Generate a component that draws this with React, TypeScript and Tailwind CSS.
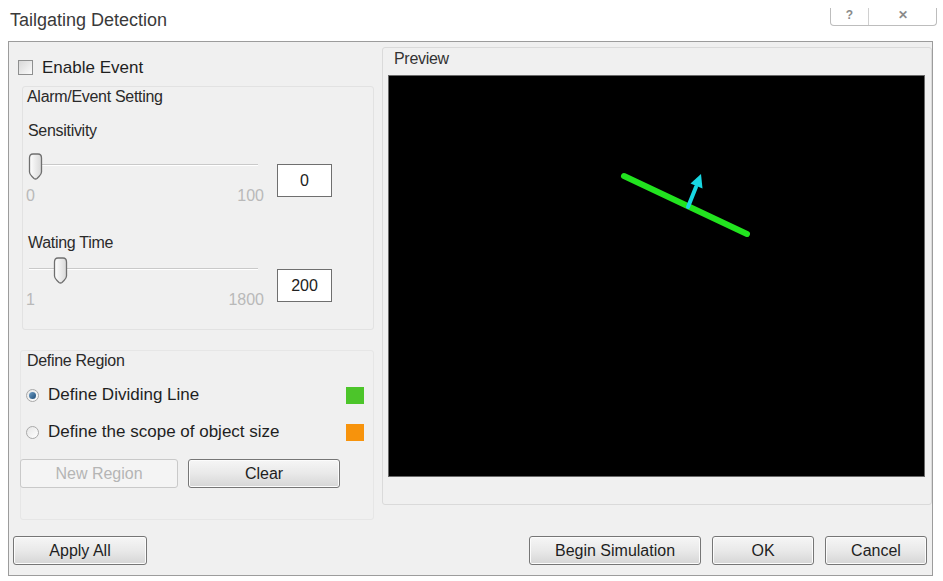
import React from "react";

const font = { fontFamily: '"Liberation Sans", Arial, sans-serif' };

function Thumb() {
  return (
    <svg width="15" height="27" viewBox="0 0 15 27">
      <defs>
        <linearGradient id="tg" x1="0" y1="0" x2="1" y2="0">
          <stop offset="0" stopColor="#ffffff" />
          <stop offset="1" stopColor="#d8d8d8" />
        </linearGradient>
      </defs>
      <path d="M1.5 5 Q1.5 1 5 1 L10 1 Q13.5 1 13.5 5 L13.5 19 Q13.5 21 11 23.5 L9 25.5 Q7.5 26.5 6 25.5 L4 23.5 Q1.5 21 1.5 19 Z" fill="url(#tg)" stroke="#6f6f6f" strokeWidth="1.3" />
    </svg>
  );
}

function Slider({ pos, min, max, value, boxTop }: { pos: number; min: string; max: string; value: string; boxTop: string }) {
  return (
    <div className="flex">
      <div className="relative w-[243px] h-[56px] ml-[3px]">
        <div className="absolute left-[3px] top-[11px] w-[229px] h-[2px] bg-[#c9c9c9] border-b border-white" />
        <div className="absolute top-0" style={{ left: pos }}>
          <Thumb />
        </div>
        <div className="absolute left-0 top-[34px] text-[16px] leading-[18px] text-[#b9b9b9]">{min}</div>
        <div className="absolute right-[5px] top-[34px] text-[16px] leading-[18px] text-[#b9b9b9]">{max}</div>
      </div>
      <div className={"ml-[8px] w-[55px] h-[33px] border border-[#6f6f6f] bg-white flex items-center justify-center text-[16px] text-[#222] " + boxTop}>
        {value}
      </div>
    </div>
  );
}

function Btn({ w, children, disabled }: { w: string; children: React.ReactNode; disabled?: boolean }) {
  return (
    <div
      className={
        "h-[29px] rounded-[3px] border flex items-center justify-center text-[16px] " +
        w +
        (disabled
          ? " border-[#c9c9c9] bg-[#f4f4f4] text-[#b5b5b5]"
          : " border-[#767676] bg-gradient-to-b from-[#f6f6f6] via-[#e9e9e9] to-[#d6d6d6] text-[#1e1e1e] shadow-[inset_0_0_0_1px_#fcfcfc]")
      }
    >
      {children}
    </div>
  );
}

function Radio({ checked }: { checked?: boolean }) {
  return (
    <div className="w-[13px] h-[13px] rounded-full border border-[#a9a9a9] bg-gradient-to-br from-[#e6e6e6] to-[#ffffff] flex items-center justify-center">
      {checked && <div className="w-[7px] h-[7px] rounded-full bg-gradient-to-br from-[#6fa0c8] to-[#1f4d78]" />}
    </div>
  );
}

export default function App() {
  return (
    <div className="w-[943px] h-[581px] bg-white flex flex-col overflow-hidden" style={font}>
      {/* title bar */}
      <div className="h-[41px] flex items-start justify-between">
        <div className="ml-[10px] mt-[9px] text-[18px] leading-[22px] text-[#3a3a3a]">Tailgating Detection</div>
        <div className="mr-[6px] mt-[8px] w-[107px] h-[18px] border border-t-0 border-[#bdbdbd] rounded-b-[4px] flex text-[#8a8a8a] text-[12px] font-bold">
          <div className="w-[38px] border-r border-[#d0d0d0] flex items-start justify-center pt-[0px] leading-[14px]">?</div>
          <div className="flex-1 flex items-start justify-center leading-[14px]">✕</div>
        </div>
      </div>

      {/* body */}
      <div className="ml-[8px] mr-[10px] h-[535px] border border-[#9c9c9c] bg-[#f0f0f0] flex flex-col">
        <div className="h-[478px] flex">
          {/* left column */}
          <div className="w-[372px] flex flex-col">
            <div className="mt-[17px] ml-[9px] flex items-center h-[17px]">
              <div className="w-[15px] h-[15px] border border-[#8e8f8f] bg-gradient-to-br from-[#d8d8d8] to-[#fbfbfb]" />
              <div className="ml-[9px] text-[17px] leading-[20px] text-[#1f1f1f]">Enable Event</div>
            </div>

            <div className="mt-[10px] ml-[13px] w-[352px] h-[244px] border border-[#e2e2e2] rounded-[3px] flex flex-col text-[#2a2a2a]">
              <div className="ml-[4px] text-[16px] leading-[20px] tracking-[-0.3px]">Alarm/Event Setting</div>
              <div className="mt-[14px] ml-[5px] text-[16px] leading-[20px] tracking-[-0.3px]">Sensitivity</div>
              <div className="mt-[12px]">
                <Slider pos={2} min="0" max="100" value="0" boxTop="mt-[11px]" />
              </div>
              <div className="mt-[24px] ml-[5px] text-[16px] leading-[20px] tracking-[-0.3px]">Wating Time</div>
              <div className="mt-[4px]">
                <Slider pos={27} min="1" max="1800" value="200" boxTop="mt-[12px]" />
              </div>
            </div>

            <div className="mt-[20px] ml-[11px] w-[354px] h-[170px] border border-[#e6e6e6] rounded-[3px] flex flex-col text-[#2a2a2a]">
              <div className="ml-[6px] text-[16px] leading-[20px] tracking-[-0.3px]">Define Region</div>
              <div className="mt-[14px] flex items-center h-[20px]">
                <div className="ml-[5px]"><Radio checked /></div>
                <div className="ml-[9px] text-[17px] leading-[20px] text-[#1f1f1f]">Define Dividing Line</div>
                <div className="ml-auto mr-[9px] w-[18px] h-[17px] bg-[#4cc52a]" />
              </div>
              <div className="mt-[17px] flex items-center h-[20px]">
                <div className="ml-[5px]"><Radio /></div>
                <div className="ml-[9px] text-[17px] leading-[20px] text-[#1f1f1f]">Define the scope of object size</div>
                <div className="ml-auto mr-[9px] w-[18px] h-[17px] bg-[#f7930c]" />
              </div>
              <div className="mt-[17px] flex gap-[10px] -ml-[1px]">
                <Btn w="w-[158px]" disabled>New Region</Btn>
                <Btn w="w-[152px]">Clear</Btn>
              </div>
            </div>
          </div>

          {/* right column */}
          <div className="ml-[1px] mt-[5px] w-[550px] h-[458px] border border-[#dadada] rounded-[3px] flex flex-col">
            <div className="ml-[11px] mt-[1px] text-[16px] leading-[20px] text-[#333] tracking-[-0.3px]">Preview</div>
            <div className="ml-[5px] mt-[6px] w-[537px] h-[402px] bg-black border border-[#6a6a6a]">
              <svg width="537" height="402" viewBox="0 0 537 402">
                <line x1="235" y1="100" x2="358" y2="158" stroke="#22e31f" strokeWidth="6" strokeLinecap="round" />
                <line x1="299" y1="131" x2="307" y2="111" stroke="#18d7e2" strokeWidth="4" strokeLinecap="round" />
                <polygon points="312,98 301.5,107.5 313.5,112.5" fill="#18d7e2" />
              </svg>
            </div>
          </div>
        </div>

        {/* bottom buttons */}
        <div className="mt-[16px] flex items-center">
          <div className="ml-[4px]">
            <Btn w="w-[134px]">Apply All</Btn>
          </div>
          <div className="ml-auto flex gap-[11px] mr-[5px]">
            <Btn w="w-[172px]">Begin Simulation</Btn>
            <Btn w="w-[102px]">OK</Btn>
            <Btn w="w-[102px]">Cancel</Btn>
          </div>
        </div>
      </div>
    </div>
  );
}
